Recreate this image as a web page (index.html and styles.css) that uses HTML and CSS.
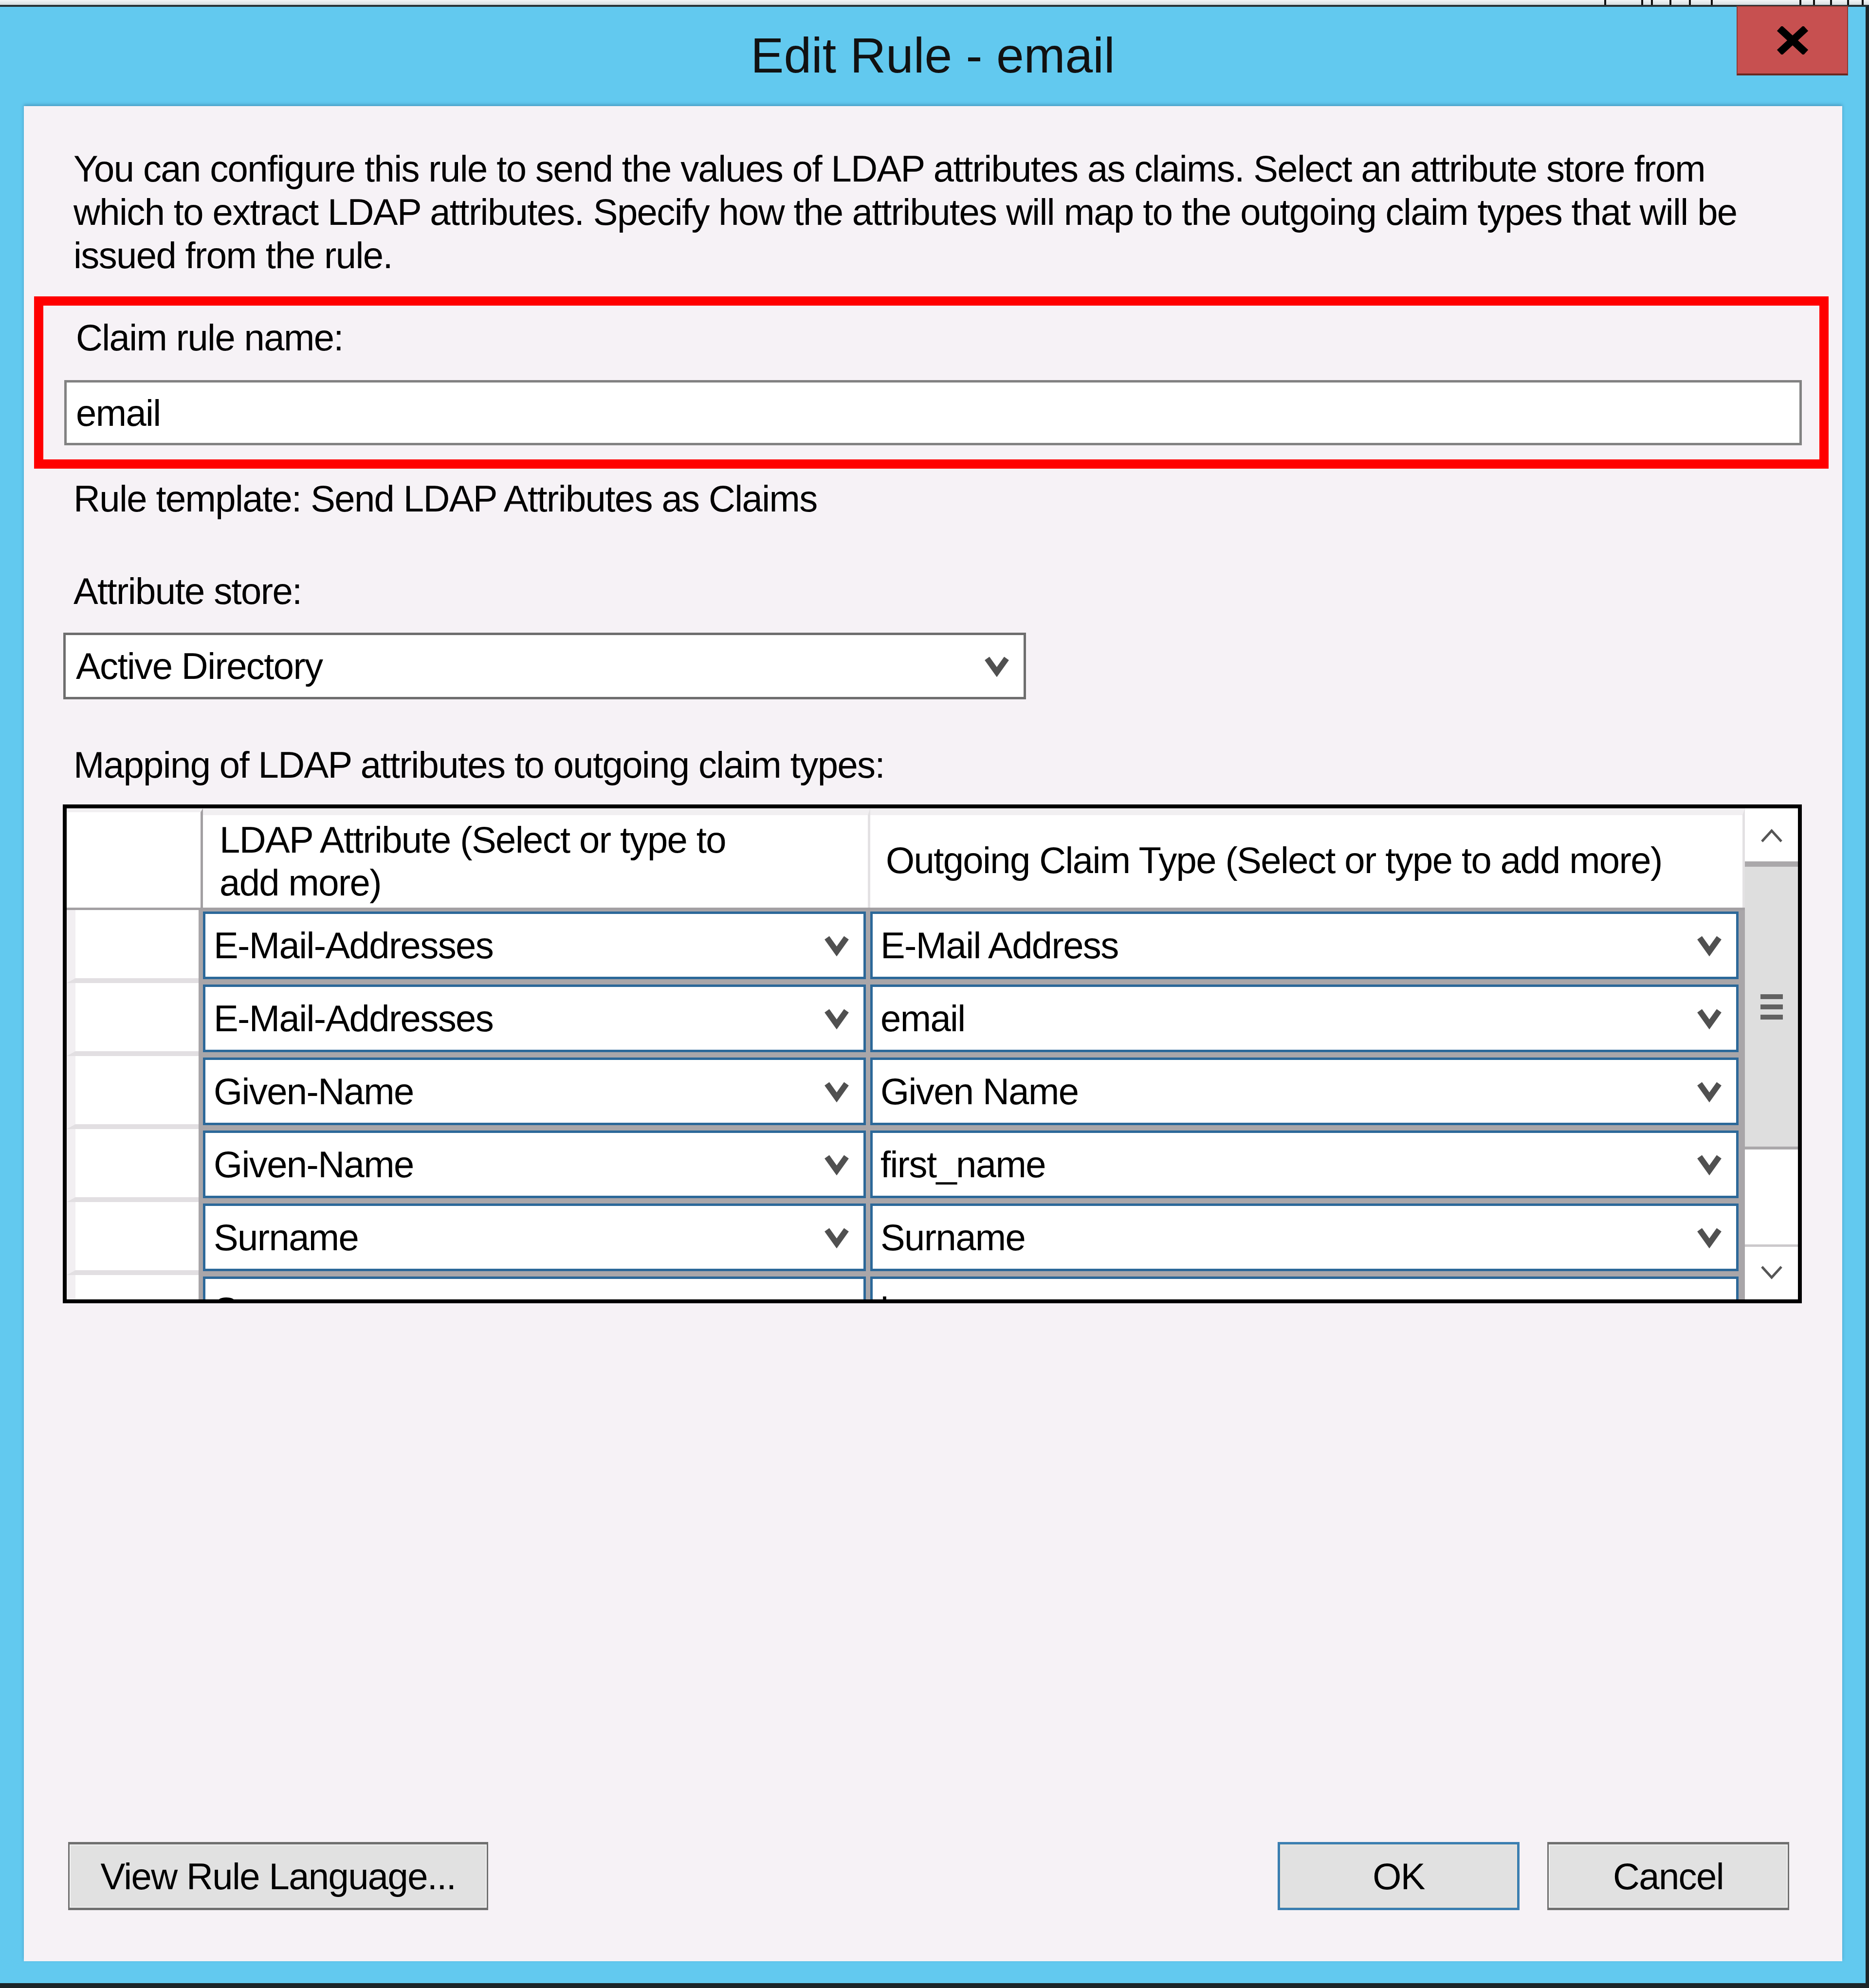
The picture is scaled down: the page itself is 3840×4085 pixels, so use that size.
FILE: index.html
```html
<!DOCTYPE html>
<html>
<head>
  <title>Edit Rule - email</title>
  <link rel="stylesheet" href="styles.css">
</head>
<body>

  <div class="top-edge">
    <span class="tick" style="left: 3296px"></span>
    <span class="tick" style="left: 3372px"></span>
    <span class="tick" style="left: 3392px"></span>
    <span class="tick" style="left: 3430px"></span>
    <span class="tick" style="left: 3470px"></span>
    <span class="tick" style="left: 3515px"></span>
    <span class="tick" style="left: 3697px"></span>
    <span class="tick" style="left: 3725px"></span>
    <span class="tick" style="left: 3760px"></span>
    <span class="tick" style="left: 3795px"></span>
    <span class="tick" style="left: 3825px"></span>
  </div>

  <div class="window">
    <div class="titlebar">
      <div class="title">Edit Rule - email</div>
      <div class="close-btn">
        <svg width="66" height="58" viewBox="0 0 66 58">
          <path d="M6 4 L60 54 M60 4 L6 54" stroke="#000" stroke-width="15" fill="none"/>
        </svg>
      </div>
    </div>

    <div class="client">
      <p class="intro">
        You can configure this rule to send the values of LDAP attributes as claims. Select an attribute store from<br>
        which to extract LDAP attributes. Specify how the attributes will map to the outgoing claim types that will be<br>
        issued from the rule.
      </p>

      <div class="rule-name-box">
        <div class="label">Claim rule name:</div>
        <div class="textbox">email</div>
      </div>

      <div class="label template">Rule template: Send LDAP Attributes as Claims</div>

      <div class="label store-label">Attribute store:</div>
      <div class="combo store-combo">
        <span>Active Directory</span>
        <svg class="chev" width="50" height="44" viewBox="0 0 50 44">
          <polyline points="5,6 25,34 45,6" stroke="#505050" stroke-width="12" fill="none"/>
        </svg>
      </div>

      <div class="label map-label">Mapping of LDAP attributes to outgoing claim types:</div>

      <div class="mapping">
        <div class="grid">
          <div class="grid-head">
            <div class="head-corner"></div>
            <div class="head-cell head-ldap">LDAP Attribute (Select or type to<br>add more)</div>
            <div class="head-cell head-claim">Outgoing Claim Type (Select or type to add more)</div>
          </div>
          <div id="gridRows"></div>
        </div>
        <div class="scrollbar">
          <div class="sb-btn">
            <svg width="48" height="34" viewBox="0 0 48 34">
              <polyline points="4,30 24,8 44,30" stroke="#555" stroke-width="5" fill="none"/>
            </svg>
          </div>
          <div class="sb-thumb">
            <span></span><span></span><span></span>
          </div>
          <div class="sb-track"></div>
          <div class="sb-btn sb-down">
            <svg width="48" height="34" viewBox="0 0 48 34">
              <polyline points="4,4 24,26 44,4" stroke="#555" stroke-width="5" fill="none"/>
            </svg>
          </div>
        </div>
      </div>

      <div class="buttons">
        <div class="btn btn-view">View Rule Language...</div>
        <div class="btn btn-ok">OK</div>
        <div class="btn btn-cancel">Cancel</div>
      </div>
    </div>
  </div>

  <script>
    const mappings = [
      ["E-Mail-Addresses", "E-Mail Address"],
      ["E-Mail-Addresses", "email"],
      ["Given-Name", "Given Name"],
      ["Given-Name", "first_name"],
      ["Surname", "Surname"],
      ["Surname", "last_name"]
    ];

    const chevron = `
      <svg class="chev" width="50" height="44" viewBox="0 0 50 44">
        <polyline points="5,6 25,34 45,6" stroke="#505050" stroke-width="12" fill="none"/>
      </svg>`;

    function renderRows() {
      const rows = document.getElementById("gridRows");
      rows.innerHTML = "";
      mappings.forEach(([ldap, claim]) => {
        rows.innerHTML += `
          <div class="grid-row">
            <div class="row-head"></div>
            <div class="cell cell-ldap"><span>${ldap}</span>${chevron}</div>
            <div class="cell cell-claim"><span>${claim}</span>${chevron}</div>
          </div>`;
      });
    }

    renderRows();
  </script>

</body>
</html>
```

FILE: styles.css
```css
body {
  margin: 0;
  width: 3840px;
  height: 4085px;
  overflow: hidden;
  background: #62c9ef;
  font-family: "Liberation Sans", Arial, sans-serif;
  font-size: 76px;
  letter-spacing: -1.6px;
  line-height: 89px;
  color: #000;
}

/* strip of the window behind, above the dialog */
.top-edge {
  position: relative;
  height: 10px;
  background: linear-gradient(#f3f6f7, #d6dde0);
}
.tick {
  position: absolute;
  top: 0;
  width: 4px;
  height: 10px;
  background: #111;
}

.window {
  height: 4075px;
  box-sizing: border-box;
  border-top: 4px solid #263236;
  border-right: 7px solid #1c2528;
  border-bottom: 10px solid #1c2528;
  background: #62c9ef;
  padding-bottom: 45px;
}

.titlebar {
  position: relative;
  height: 204px;
}
.title {
  padding-top: 45px;
  text-align: center;
  font-size: 102px;
  letter-spacing: 0;
  line-height: 110px;
  color: #111;
}
.close-btn {
  position: absolute;
  left: 3568px;
  top: -2px;
  width: 229px;
  height: 143px;
  box-sizing: border-box;
  background: #c75050;
  border: 2px solid #8e3a32;
  border-bottom: 4px solid #6a2820;
  display: flex;
  align-items: center;
  justify-content: center;
}

.client {
  margin-left: 49px;
  width: 3736px;
  height: 3812px;
  background: #f6f2f6;
  box-shadow: 0 -3px 6px rgba(40, 100, 140, 0.45);
  display: flex;
  flex-direction: column;
  align-items: flex-start;
  white-space: nowrap;
}

.intro {
  margin: 84px 0 0 102px;
}

.label {
  height: 89px;
}

.rule-name-box {
  margin: 40px 0 0 21px;
  width: 3687px;
  box-sizing: border-box;
  border: 19px solid #ff0000;
  padding: 21px 36px 29px 43px;
}
.rule-name-box .label {
  padding-left: 24px;
}
.textbox {
  margin-top: 43px;
  height: 134px;
  box-sizing: border-box;
  border: 5px solid #828282;
  background: #fff;
  padding-left: 19px;
  display: flex;
  align-items: center;
}

.template { margin: 17px 0 0 102px; }
.store-label { margin: 101px 0 0 102px; }

.combo {
  box-sizing: border-box;
  background: #fff;
  display: flex;
  align-items: center;
  justify-content: space-between;
}
.store-combo {
  margin: 41px 0 0 81px;
  width: 1978px;
  height: 137px;
  border: 5px solid #6e6e6e;
  padding: 0 30px 0 21px;
}

.map-label { margin: 90px 0 0 102px; }

/* mapping grid */
.mapping {
  margin: 37px 0 0 80px;
  width: 3573px;
  height: 1025px;
  box-sizing: border-box;
  border: 8px solid #000;
  background: #fff;
  display: flex;
}
.grid {
  width: 3448px;
  overflow: hidden;
  background: #a9a6a9;
}
.grid-head {
  display: grid;
  grid-template-columns: 280px 1371px 1797px;
  height: 209px;
  box-sizing: border-box;
  border-bottom: 5px solid #a3a0a3;
}
.head-corner {
  background: #fff;
  border-right: 5px solid #a3a0a3;
  border-top: 8px solid #f1eff1;
}
.head-cell {
  background: #fff;
  border-right: 5px solid #e3e1e3;
  border-top: 14px solid #f1eff1;
  display: flex;
  align-items: center;
}
.head-ldap { padding-left: 34px; line-height: 88px; }
.head-claim { padding-left: 32px; padding-bottom: 6px; }

.grid-row {
  display: grid;
  grid-template-columns: 280px 1371px 1797px;
  height: 150px;
}
.row-head {
  background: #fff;
  border-left: 18px solid #f2eff2;
  border-bottom: 10px solid #e2dfe2;
  margin-right: 9px;
}
.cell {
  margin-top: 3px;
  height: 139px;
  box-sizing: border-box;
  border: 5px solid #2c6899;
  background: #fff;
  display: flex;
  align-items: center;
  justify-content: space-between;
  padding: 0 30px 0 17px;
}
.cell-ldap { margin-right: 9px; }
.cell-claim { margin-right: 13px; padding-left: 16px; }

.scrollbar {
  width: 109px;
  display: flex;
  flex-direction: column;
  background: #fff;
}
.sb-btn {
  height: 109px;
  display: flex;
  align-items: center;
  justify-content: center;
}
.sb-down {
  height: 108px;
  border-top: 5px solid #cbc9cb;
}
.sb-thumb {
  height: 575px;
  border-top: 11px solid #aaa8aa;
  border-bottom: 6px solid #aaa8aa;
  background: #dedede;
  display: flex;
  flex-direction: column;
  align-items: center;
  justify-content: center;
  gap: 11px;
}
.sb-thumb span {
  width: 46px;
  height: 10px;
  background: #626262;
}
.sb-track {
  flex: 1;
}

/* dialog buttons */
.buttons {
  margin: auto 0 105px 91px;
  width: 3536px;
  display: flex;
}
.btn {
  height: 140px;
  box-sizing: border-box;
  border-style: solid;
  border-color: #707070;
  border-width: 5px 3px;
  background: #e1e1e1;
  box-shadow: inset 0 0 0 2px #f3f3f3;
  display: flex;
  align-items: center;
  justify-content: center;
}
.btn-view { width: 863px; }
.btn-ok {
  width: 497px;
  margin-left: auto;
  border: 5px solid #3c7fb1;
  box-shadow: inset 0 0 0 2px #ece6dc;
}
.btn-cancel {
  width: 497px;
  margin-left: 57px;
}
```
